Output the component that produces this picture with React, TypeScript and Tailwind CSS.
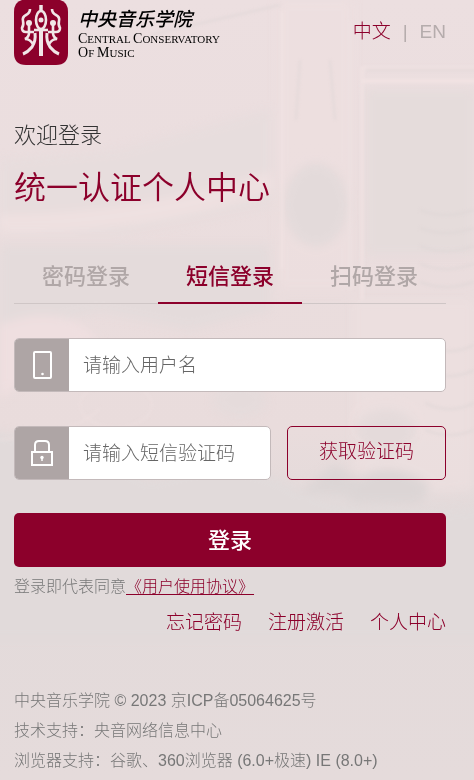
import { useState } from "react";

const tabs = ["密码登录", "短信登录", "扫码登录"];

const links = [
  { label: "忘记密码", href: "#forgot" },
  { label: "注册激活", href: "#activate" },
  { label: "个人中心", href: "#profile" },
];

const footerLines = [
  "中央音乐学院 © 2023 京ICP备05064625号",
  "技术支持：央音网络信息中心",
  "浏览器支持：谷歌、360浏览器 (6.0+极速) IE (8.0+)",
];

function Backdrop() {
  return (
    <svg
      className="absolute inset-0 -z-10 h-full w-full"
      viewBox="0 0 474 780"
      preserveAspectRatio="xMidYMid slice"
      aria-hidden="true"
    >
      <defs>
        <linearGradient id="base" x1="0" y1="0" x2="0" y2="1">
          <stop offset="0" stopColor="#ecdfe0" />
          <stop offset="0.55" stopColor="#e9dcdc" />
          <stop offset="0.68" stopColor="#e2dada" />
          <stop offset="1" stopColor="#e5dbdb" />
        </linearGradient>
        <filter id="soft">
          <feGaussianBlur stdDeviation="5" />
        </filter>
        <filter id="fine">
          <feGaussianBlur stdDeviation="1.500" />
        </filter>
      </defs>
      <rect width="474" height="780" fill="url(#base)" />
      <g filter="url(#soft)">
        <path d="M0 160 L120 150 L270 110 V205 L120 235 H0Z" fill="#e7dddd" />
        <path d="M0 245 H270 V310 L190 330 L100 312 L0 330Z" fill="#e4dbdb" />
        <path d="M0 215 Q130 215 270 172 V192 Q150 232 0 232Z" fill="#efe1e1" />
        <path d="M366 90 H474 V255 H366Z" fill="#e5dcdb" />
        <path d="M278 0 H352 V290 H278Z" fill="#efe1e1" opacity="0.45" />
        <ellipse cx="316" cy="205" rx="32" ry="42" fill="#e3dada" />
        <path d="M352 300 H474 V490 Q400 500 352 470Z" fill="#eddfdf" opacity="0.7" />
        <path d="M-20 430 Q80 440 150 480 Q240 450 300 490 Q390 520 494 505 V640 H-20Z" fill="#e1dada" />
        <path d="M300 492 L385 500 L335 465Z" fill="#dcd5d5" />
        <path d="M350 485 Q385 455 430 485 L420 503 H350Z" fill="#dcd5d5" />
        <ellipse cx="386" cy="432" rx="30" ry="22" fill="#e4dada" />
        <ellipse cx="240" cy="400" rx="26" ry="18" fill="#e5dbdb" />
        <path d="M0 325 Q60 300 100 340 Q60 345 0 400Z" fill="#efdfe0" />
      </g>
      <g filter="url(#fine)" fill="none">
        <g stroke="#f1e3e3" strokeWidth="4">
          <path d="M362 300 V68 H480" opacity="0.7" />
          <path d="M362 81 H480" />
          <path d="M282 10 V270" opacity="0.5" />
          <path d="M350 20 V290" opacity="0.4" />
        </g>
        <g stroke="#ded5d5" strokeWidth="2" opacity="0.6">
          <path d="M366 70 H480" />
          <path d="M300 60 L296 120 M330 60 L335 120" />
          <path d="M150 35 L280 5" />
          <path d="M420 210 Q445 220 474 210 M420 228 Q445 238 474 228 M420 246 Q445 256 474 246 M420 264 Q445 274 474 264 M420 282 Q445 292 474 282" />
          <path d="M425 345 Q450 357 474 345 M425 370 Q450 382 474 370 M425 403 Q450 415 474 403 M425 430 Q450 440 474 430" />
        </g>
        <g stroke="#f0e2e2" strokeWidth="2" opacity="0.5">
          <ellipse cx="116" cy="405" rx="36" ry="22" />
          <ellipse cx="386" cy="422" rx="36" ry="26" />
          <path d="M0 440 Q80 432 100 408" />
        </g>
      </g>
    </svg>
  );
}

function Emblem() {
  return (
    <svg className="h-[65px] w-[54px]" viewBox="0 0 54 65" aria-hidden="true">
      <path
        d="M8 0 H46 Q54 2 54 12 V53 Q54 65 42 65 H12 Q0 65 0 53 V12 Q0 2 8 0Z"
        fill="#8c002b"
      />
      <g fill="none" stroke="#f1e6e7" strokeWidth="2.600">
        <path d="M27 5 V11" strokeWidth="3.500" />
        <ellipse cx="27" cy="20" rx="5" ry="9" />
        <path d="M20 30 H34" />
        <path d="M27 30 V56" strokeWidth="4" />
        <path d="M16 9 Q16 13 12 15 Q8 17 9 21 Q10 25 8 28 Q8 32 12 32 H20" />
        <path d="M38 9 Q38 13 42 15 Q46 17 45 21 Q44 25 46 28 Q46 32 42 32 H34" />
        <path d="M15 24 V33 Q15 37 11 39 Q16 39 19 44" />
        <path d="M39 24 V33 Q39 37 43 39 Q38 39 35 44" />
        <path d="M21 33 Q22 41 18 47 Q14 52 9 54" strokeWidth="3" />
        <path d="M33 33 Q32 41 36 47 Q40 52 45 54" strokeWidth="3" />
      </g>
      <g fill="#f1e6e7">
        <circle cx="27" cy="20" r="2.500" />
        <circle cx="15" cy="23" r="3" />
        <circle cx="39" cy="23" r="3" />
      </g>
    </svg>
  );
}

function PhoneIcon() {
  return (
    <svg width="22" height="30" viewBox="0 0 22 30" fill="none" aria-hidden="true">
      <rect x="3" y="2" width="17" height="26" rx="1" stroke="white" strokeWidth="2" />
      <circle cx="11.500" cy="24" r="1.300" fill="white" />
    </svg>
  );
}

function LockIcon() {
  return (
    <svg width="24" height="30" viewBox="0 0 24 30" fill="none" aria-hidden="true">
      <rect x="2" y="14" width="20" height="13" stroke="white" strokeWidth="2" />
      <path d="M5 14 V7 Q5 3 9 3 H15 Q19 3 19 7 V14" stroke="white" strokeWidth="2" />
      <circle cx="12" cy="19.500" r="1.700" fill="white" />
      <path d="M12 20 V23" stroke="white" strokeWidth="1.500" />
    </svg>
  );
}

function Field({
  id,
  label,
  icon,
}: {
  id: string;
  label: string;
  icon: React.ReactNode;
}) {
  return (
    <div className="flex h-[54px] min-w-0 flex-1 overflow-hidden rounded-[5px] border border-[#c3b9ba] bg-white">
      <label
        htmlFor={id}
        aria-label={label}
        className="flex w-[54px] shrink-0 items-center justify-center bg-[#aea5a5]"
      >
        {icon}
      </label>
      <input
        id={id}
        type="text"
        placeholder={label}
        className="min-w-0 flex-1 px-3.5 pt-0.5 text-[19px] outline-none placeholder:text-[#666666]"
      />
    </div>
  );
}

export default function App() {
  const [activeTab, setActiveTab] = useState(1);

  return (
    <div className="relative isolate min-h-screen overflow-hidden pr-7 pl-3.5 font-['Liberation_Sans','Noto_Sans_CJK_SC',sans-serif] font-light">
      <Backdrop />
      <header className="flex items-start justify-between">
        <a href="#home" className="flex gap-2.5 text-black">
          <Emblem />
          <span className="flex flex-col pt-1 whitespace-nowrap">
            <span className="font-['Noto_Sans_CJK_SC',sans-serif] text-[19px] leading-7 font-medium italic">
              中央音乐学院
            </span>
            <span className="font-['Liberation_Serif',serif] text-[11px] leading-[13px] font-normal uppercase">
              <span className="block first-letter:text-[14px]">
                Central <span className="text-[14px]">C</span>onservatory
              </span>
              <span className="block first-letter:text-[14px]">
                Of <span className="text-[14px]">M</span>usic
              </span>
            </span>
          </span>
        </a>
        <div className="flex gap-3 pt-[18px] text-[19px] leading-7 text-[#b5acac]">
          <button type="button" className="text-[#8c002b]">
            中文
          </button>
          <span>|</span>
          <button type="button">EN</button>
        </div>
      </header>

      <main>
        <h2 className="mt-[55px] text-[22px] leading-8 text-[#333333]">欢迎登录</h2>
        <h1 className="mt-3 text-[32px] leading-12 font-[350] text-[#8c002b]">
          统一认证个人中心
        </h1>

        <div role="tablist" className="mt-[39px] flex border-b border-[#cfc6c6]">
          {tabs.map((tab, index) => (
            <button
              key={tab}
              type="button"
              role="tab"
              aria-selected={index === activeTab}
              onClick={() => setActiveTab(index)}
              className={`-mb-px h-[53px] flex-1 border-b-2 text-[22px] font-medium ${
                index === activeTab
                  ? "border-[#8c002b] text-[#8c002b]"
                  : "border-transparent text-[#b0a7a7]"
              }`}
            >
              {tab}
            </button>
          ))}
        </div>

        <form className="mt-[34px]" onSubmit={(e) => e.preventDefault()}>
          <div className="flex">
            <Field id="username" label="请输入用户名" icon={<PhoneIcon />} />
          </div>
          <div className="mt-[34px] flex gap-4">
            <Field id="code" label="请输入短信验证码" icon={<LockIcon />} />
            <button
              type="button"
              className="h-[54px] w-[159px] shrink-0 rounded-[5px] border border-[#8c002b] pb-0.5 text-[19px] text-[#8c002b]"
            >
              获取验证码
            </button>
          </div>
          <button
            type="submit"
            className="mt-[33px] h-[54px] w-full rounded-[5px] bg-[#8c002b] text-[22px] font-medium text-white"
          >
            登录
          </button>
        </form>

        <p className="mt-2 text-base text-[#777777]">
          登录即代表同意
          <a
            href="#agreement"
            className="text-[#8c002b] underline decoration-1 underline-offset-2"
          >
            《用户使用协议》
          </a>
        </p>
        <nav className="mt-2.5 flex justify-end gap-[26px] text-[19px] leading-7 text-[#8c002b]">
          {links.map((link) => (
            <a key={link.href} href={link.href}>
              {link.label}
            </a>
          ))}
        </nav>
      </main>

      <footer className="mt-[49px] text-base leading-[30px] text-[#777777]">
        {footerLines.map((line) => (
          <p key={line}>{line}</p>
        ))}
      </footer>
    </div>
  );
}
